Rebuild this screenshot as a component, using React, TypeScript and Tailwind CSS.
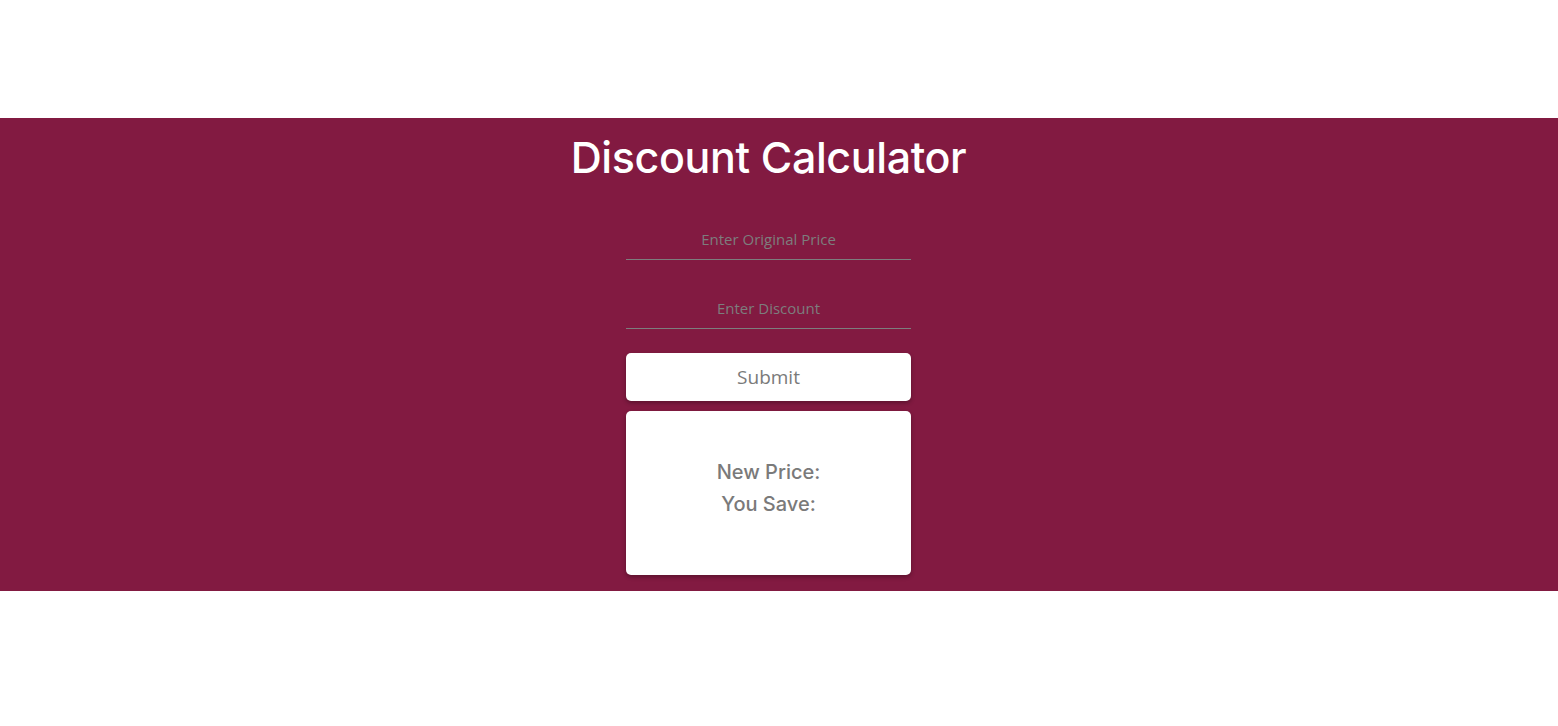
import React, { useState } from "react";

const inputStyle = `w-full h-[37px] pb-[4px] bg-transparent text-center outline-none
  border-b border-[#7d7d7d] text-[15px] text-white placeholder-[#7d7d7d]`;

export default function App() {
  const [price, setPrice] = useState("");
  const [discount, setDiscount] = useState("");

  return (
    <div className="w-full h-[726px] bg-white pt-[118px]" style={{ fontFamily: "'Open Sans', 'Noto Sans', sans-serif" }}>
      {/* Main band */}
      <div className="w-full h-[473px] bg-[#821a41] flex flex-col items-center pr-[21px]">
        <h1
          className="mt-[14px] text-[43px] leading-[50px] font-medium text-white tracking-[-0.4px]"
          style={{ fontFamily: "Inter, sans-serif" }}
        >
          Discount Calculator
        </h1>

        <form
          className="w-[285px] mt-[41px] flex flex-col"
          onSubmit={(e) => e.preventDefault()}
        >
          {/* Price Field */}
          <input
            type="text"
            value={price}
            onChange={(e) => setPrice(e.target.value)}
            placeholder="Enter Original Price"
            className={inputStyle}
          />

          {/* Discount Field */}
          <input
            type="text"
            value={discount}
            onChange={(e) => setDiscount(e.target.value)}
            placeholder="Enter Discount"
            className={inputStyle + " mt-[32px]"}
          />

          {/* Submit Button */}
          <button
            type="submit"
            className="mt-[24px] h-[48px] w-full bg-white rounded-[5px] text-[19px] text-[#7a7a7a] shadow-[0_2px_4px_rgba(0,0,0,0.3)]"
          >
            Submit
          </button>

          {/* Result */}
          <div
            className="mt-[10px] h-[164px] w-full pb-[10px] bg-white rounded-[5px] shadow-[0_2px_4px_rgba(0,0,0,0.3)]
                       flex flex-col items-center justify-center text-[20px] leading-[32px] font-medium text-[#7a7a7a]"
            style={{ fontFamily: "Inter, sans-serif" }}
          >
            <p>New Price:</p>
            <p>You Save:</p>
          </div>
        </form>
      </div>
    </div>
  );
}
